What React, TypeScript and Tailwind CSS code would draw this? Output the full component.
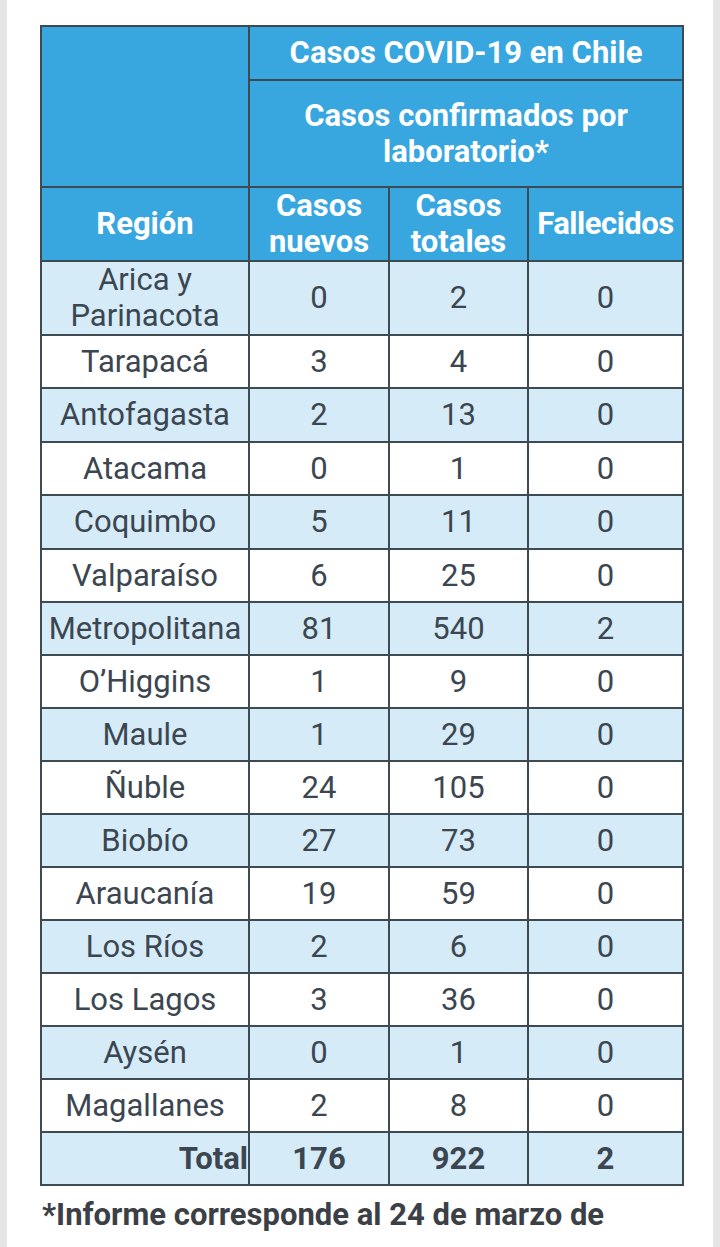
import React from "react";

const ROWS: [string, string, string, string, number][] = [
  ["Tarapacá", "3", "4", "0", 53],
  ["Antofagasta", "2", "13", "0", 54],
  ["Atacama", "0", "1", "0", 53],
  ["Coquimbo", "5", "11", "0", 54],
  ["Valparaíso", "6", "25", "0", 53],
  ["Metropolitana", "81", "540", "2", 53],
  ["O’Higgins", "1", "9", "0", 53],
  ["Maule", "1", "29", "0", 53],
  ["Ñuble", "24", "105", "0", 53],
  ["Biobío", "27", "73", "0", 53],
  ["Araucanía", "19", "59", "0", 53],
  ["Los Ríos", "2", "6", "0", 53],
  ["Los Lagos", "3", "36", "0", 53],
  ["Aysén", "0", "1", "0", 53],
  ["Magallanes", "2", "8", "0", 53],
];

const cell = "border-2 border-[#3d4a52] text-center align-middle";

const App = () => {
  return (
    <div className="flex min-h-[1247px] w-[720px] bg-[#e6e6e6] px-[7px] font-['Roboto',sans-serif]">
      <div className="flex-1 bg-white pl-[33px] pt-[25px]">
        <table className="w-[642px] table-fixed border-collapse text-[31px] leading-[36px] text-[#3b4650]">
          <colgroup>
            <col className="w-[208px]" />
            <col className="w-[140px]" />
            <col className="w-[139px]" />
            <col className="w-[155px]" />
          </colgroup>
          <thead className="bg-[#38a6df] text-[31px] font-bold text-white">
            <tr className="h-[54px]">
              <th rowSpan={2} className={cell}></th>
              <th colSpan={3} className={cell}>
                Casos COVID-19 en Chile
              </th>
            </tr>
            <tr className="h-[107px]">
              <th colSpan={3} className={`${cell} px-10`}>
                Casos confirmados por laboratorio*
              </th>
            </tr>
            <tr className="h-[74px]">
              <th className={cell}>Región</th>
              <th className={cell}>
                Casos
                <br />
                nuevos
              </th>
              <th className={cell}>
                Casos
                <br />
                totales
              </th>
              <th className={`${cell} tracking-[-0.5px]`}>Fallecidos</th>
            </tr>
          </thead>
          <tbody>
            <tr className="h-[73px] bg-[#d6ebf8]">
              <td className={cell}>
                Arica y
                <br />
                Parinacota
              </td>
              <td className={cell}>0</td>
              <td className={cell}>2</td>
              <td className={cell}>0</td>
            </tr>
            {ROWS.map((row, index) => (
              <tr
                key={row[0]}
                style={{ height: row[4] }}
                className={index % 2 === 0 ? "bg-white" : "bg-[#d6ebf8]"}
              >
                {row.slice(0, 4).map((value, i) => (
                  <td key={i} className={cell}>
                    {value}
                  </td>
                ))}
              </tr>
            ))}
            <tr className="h-[53px] bg-[#d6ebf8] font-bold">
              <td className={`${cell} text-right`}>Total</td>
              <td className={cell}>176</td>
              <td className={cell}>922</td>
              <td className={cell}>2</td>
            </tr>
          </tbody>
        </table>
        <p className="mt-[6px] pl-[2px] text-[31px] font-bold text-[#3b4046]">
          *Informe corresponde al 24 de marzo de
        </p>
      </div>
    </div>
  );
};

export default App;
